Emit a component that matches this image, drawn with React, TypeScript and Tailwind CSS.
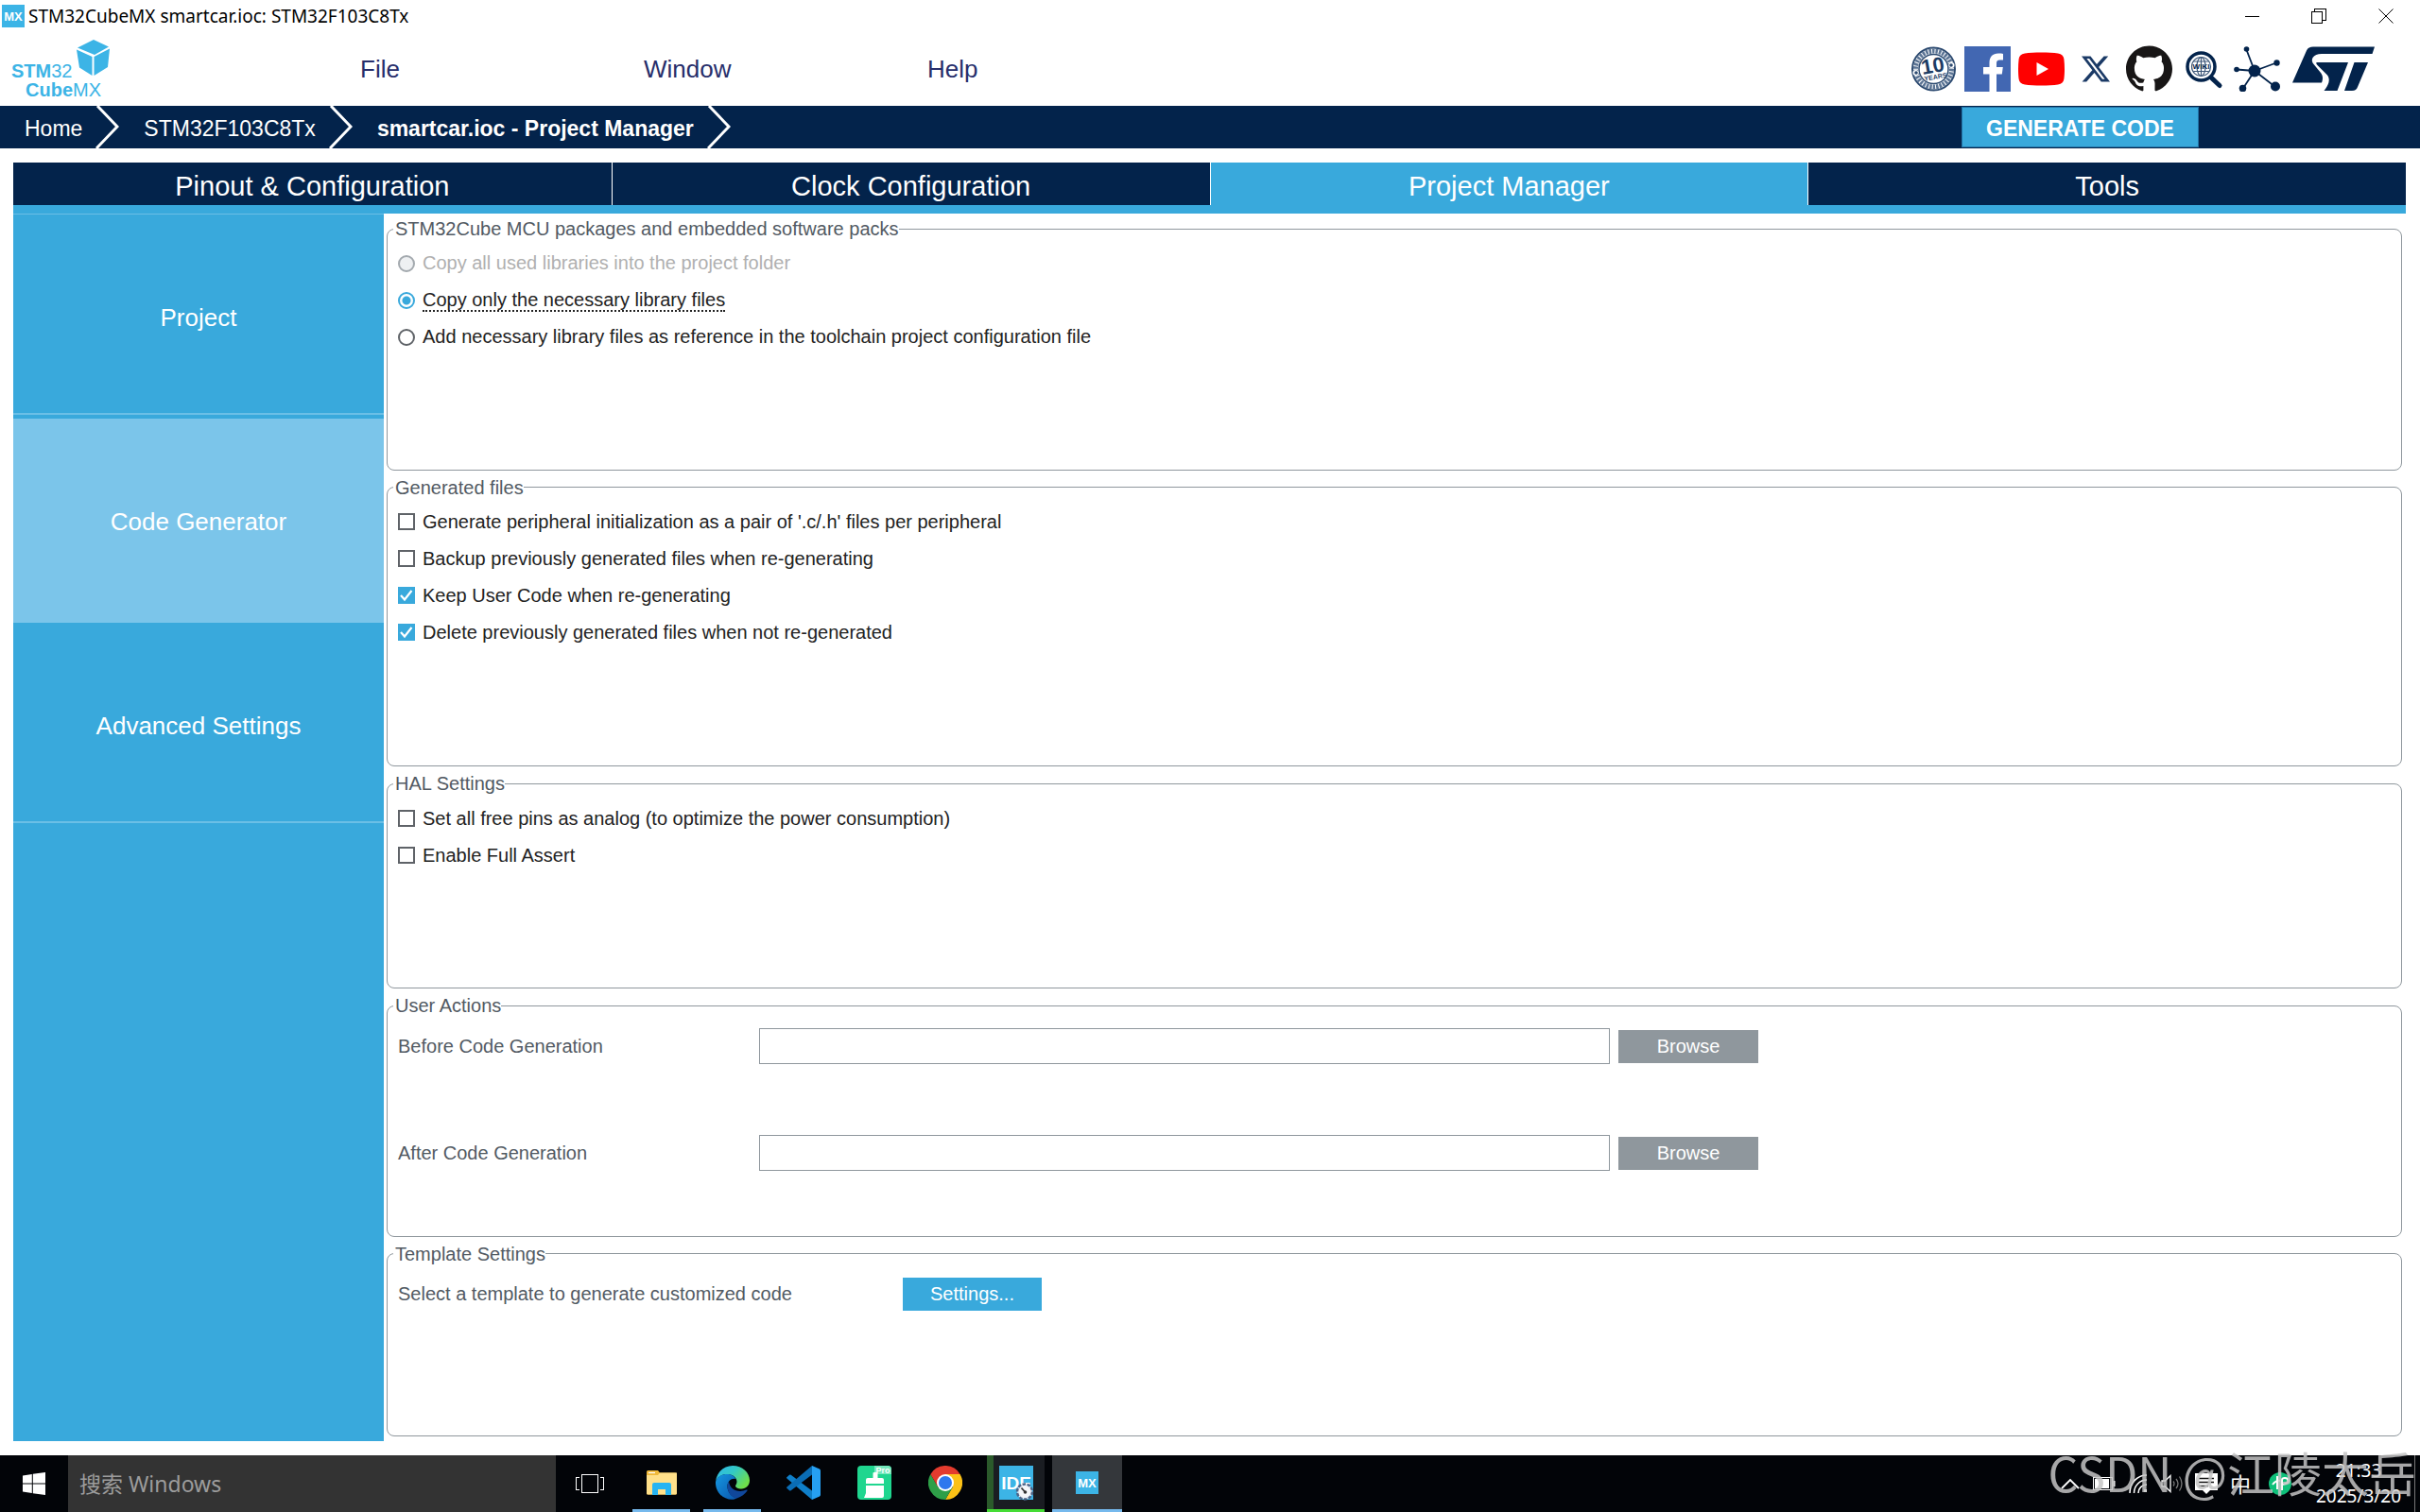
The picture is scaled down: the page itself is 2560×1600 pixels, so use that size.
import React, { useState } from 'react';
import { SiGithub, SiX } from 'react-icons/si';

interface Crumb {
  label: string;
  current?: boolean;
}

interface Choice {
  id: string;
  label: string;
  disabled?: boolean;
}

const MENUS: string[] = ['File', 'Window', 'Help'];

const CRUMBS: Crumb[] = [
  { label: 'Home' },
  { label: 'STM32F103C8Tx' },
  { label: 'smartcar.ioc - Project Manager', current: true },
];

const TABS: string[] = ['Pinout & Configuration', 'Clock Configuration', 'Project Manager', 'Tools'];

const SECTIONS: string[] = ['Project', 'Code Generator', 'Advanced Settings'];

const LIBRARY_CHOICES: Choice[] = [
  { id: 'copy-all', label: 'Copy all used libraries into the project folder', disabled: true },
  { id: 'copy-needed', label: 'Copy only the necessary library files' },
  {
    id: 'reference',
    label: 'Add necessary library files as reference in the toolchain project configuration file',
  },
];

const FILE_OPTIONS: Choice[] = [
  { id: 'pair', label: "Generate peripheral initialization as a pair of '.c/.h' files per peripheral" },
  { id: 'backup', label: 'Backup previously generated files when re-generating' },
  { id: 'keep', label: 'Keep User Code when re-generating' },
  { id: 'delete', label: 'Delete previously generated files when not re-generated' },
];

const HAL_OPTIONS: Choice[] = [
  { id: 'analog', label: 'Set all free pins as analog (to optimize the power consumption)' },
  { id: 'assert', label: 'Enable Full Assert' },
];

/* ---------- logos and icons ---------- */

const CubeLogo: React.FC = () => (
  <svg width="104" height="62" viewBox="0 0 104 62" aria-label="STM32 CubeMX">
    <path d="M70 8.500 87 0l16 7.500-15 8.500z" fill="#3cb4e6" />
    <path d="M69 10.500 85.500 18V38L72 29.500z" fill="#3cb4e6" />
    <path d="M87.500 18 104 9.500 102 29 87.500 38z" fill="#3cb4e6" />
    <text x="0" y="40" fontSize="20" fill="#3cb4e6" fontFamily="Liberation Sans, sans-serif">
      <tspan fontWeight="700">STM</tspan>32
    </text>
    <text x="15" y="60" fontSize="20" fill="#3cb4e6" fontFamily="Liberation Sans, sans-serif">
      <tspan fontWeight="700">Cube</tspan>MX
    </text>
  </svg>
);

const MxIcon: React.FC<{ size: number }> = ({ size }) => (
  <svg width={size} height={size} viewBox="0 0 24 24">
    <rect width="24" height="24" fill="#3cb4e6" />
    <text
      x="12"
      y="17"
      fontSize="13"
      fontWeight="700"
      textAnchor="middle"
      fill="#fff"
      fontFamily="Liberation Sans, sans-serif"
    >
      MX
    </text>
  </svg>
);

const TenYearsIcon: React.FC = () => (
  <svg width="49" height="48" viewBox="0 0 49 48">
    <circle cx="24.500" cy="24" r="22.500" fill="#fff" stroke="#2c4a70" strokeWidth="2" />
    <circle cx="24.500" cy="24" r="19" fill="none" stroke="#5b7494" strokeWidth="5" strokeDasharray="2.500 1" />
    <circle cx="24.500" cy="24" r="15.500" fill="#fff" stroke="#2c4a70" strokeWidth="1.500" />
    <circle cx="5.500" cy="28" r="3" fill="#fff" />
    <circle cx="43.500" cy="20" r="3" fill="#fff" />
    <circle cx="6" cy="28" r="1.800" fill="#2c4a70" />
    <circle cx="43" cy="20" r="1.800" fill="#2c4a70" />
    <g transform="rotate(-10 24 24)" fill="#1d3c64" fontFamily="Liberation Sans, sans-serif" fontWeight="700">
      <text x="24" y="28" fontSize="22" textAnchor="middle">10</text>
      <text x="25" y="35" fontSize="7" textAnchor="middle">YEARS</text>
    </g>
  </svg>
);

const FacebookIcon: React.FC = () => (
  <svg width="49" height="48" viewBox="0 0 49 48">
    <rect width="49" height="48" fill="#4267b2" />
    <path
      d="M26.500 48V29.500H20V22h6.500v-4.500C26.500 11 30 7.500 36 7.500c2 0 4 .2 5 .4v6.600h-3.600c-2.700 0-3.400 1.400-3.400 3.500v4h6.800l-1 7.500H34V48z"
      fill="#fff"
    />
  </svg>
);

const YoutubeIcon: React.FC = () => (
  <svg width="49" height="48" viewBox="0 0 49 48">
    <path
      d="M7 7.500c9-1.300 26-1.300 35 0 4 .6 6 2.500 6.400 6 .8 6.500.8 15 0 21-.4 3.500-2.400 5.400-6.400 6-9 1.300-26 1.300-35 0-4-.6-6-2.500-6.400-6-.8-6-.8-14.500 0-21C1 10 3 8.100 7 7.500z"
      fill="#f00"
    />
    <path d="M19.500 17v14L32 24z" fill="#fff" />
  </svg>
);

const WikiIcon: React.FC = () => (
  <svg width="49" height="48" viewBox="0 0 49 48" fill="none" stroke="#03234b">
    <path d="m30 30 7 6.500" strokeWidth="4" />
    <path d="m34 34 8 7.500" strokeWidth="5" strokeLinecap="round" />
    <circle cx="22.500" cy="21.500" r="14.500" strokeWidth="3.500" fill="#fff" />
    <g strokeWidth="1.200" stroke="#3d5778">
      <circle cx="22.500" cy="21.500" r="10" />
      <ellipse cx="22.500" cy="21.500" rx="4.500" ry="10" />
      <path d="M22.500 11.500v20M14.500 16h16M14.500 26.500h16" />
    </g>
    <text
      x="22.500"
      y="24"
      fontSize="8"
      fontWeight="700"
      textAnchor="middle"
      fill="#03234b"
      stroke="none"
      fontFamily="Liberation Sans, sans-serif"
    >
      WIKI
    </text>
  </svg>
);

const CommunityIcon: React.FC = () => (
  <svg width="49" height="48" viewBox="0 0 49 48" fill="#03234b">
    <path d="M22 26 13 2.500M22 26 45 17.500M22 26 3 24.500M22 26 9.500 45M22 26l22 17" stroke="#03234b" strokeWidth="1.800" />
    <circle cx="22" cy="26" r="6.500" />
    <circle cx="13.500" cy="3" r="2.800" />
    <circle cx="45.500" cy="17.500" r="3.200" />
    <circle cx="3" cy="24.500" r="2.800" />
    <circle cx="9.500" cy="44.500" r="3.800" />
    <circle cx="44" cy="42.500" r="5" />
  </svg>
);

const StLogo: React.FC = () => (
  <svg width="87" height="48" viewBox="0 0 87 48" fill="#03234b">
    <path d="M15 4.500C16.500 1.500 18.500.500 22 .500h65L84.500 8H31c-9 0-13 6-8 11.500l7 8.500c2.500 3 2.500 7 1 10.500H0z" />
    <path d="M25.500 17H59L47.500 47H33.500c5-6 7-12 3.500-16.500L26.500 20c-1-1-1.500-2-1-3z" />
    <path d="M65.500 17h14.500L69 43c-1 2.800-2.500 4-6 4h-8z" />
  </svg>
);

const WindowsLogo: React.FC = () => (
  <svg width="24" height="24" viewBox="0 0 24 24" fill="#fff">
    <path d="M0 3.400 9.800 2v9.500H0zM10.800 1.800 24 0v11.500H10.800zM0 12.500h9.800V22L0 20.600zM10.800 12.500H24V24l-13.200-1.800z" />
  </svg>
);

const TaskViewIcon: React.FC = () => (
  <svg width="30" height="20" viewBox="0 0 30 20" fill="none" stroke="#fff" shapeRendering="crispEdges">
    <rect x="6.500" y=".500" width="17" height="19" />
    <path d="M4 3.500H.500v13H4M26 3.500h3.500v13H26" />
  </svg>
);

const FolderIcon: React.FC = () => (
  <svg width="36" height="36" viewBox="0 0 36 36">
    <path d="M2 6.500Q2 5 3.500 5H14l2 2.500h16.500q1.500 0 1.500 1.500v20q0 1.500-1.500 1.500h-29Q2 30.500 2 29z" fill="#f0b93a" />
    <path d="M2 10h12l2-2.500h18V29q0 1.500-1.500 1.500h-29Q2 30.500 2 29z" fill="#ffe08a" />
    <path d="M4 7.500h7" stroke="#fff" strokeWidth="1.200" />
    <path d="M8 31V20q0-2 2-2h16q2 0 2 2v11h-6v-6h-8v6z" fill="#27b4f2" />
  </svg>
);

const EdgeIcon: React.FC = () => (
  <svg width="36" height="36" viewBox="0 0 36 36">
    <defs>
      <linearGradient id="edge-top" x1="0" y1="0" x2="1" y2=".6">
        <stop offset="0" stopColor="#2fb7ee" />
        <stop offset=".5" stopColor="#33c9c4" />
        <stop offset="1" stopColor="#6fdf4a" />
      </linearGradient>
      <linearGradient id="edge-low" x1="0" y1="0" x2="1" y2="1">
        <stop offset="0" stopColor="#1597e0" />
        <stop offset="1" stopColor="#0a56ae" />
      </linearGradient>
    </defs>
    <path d="M0 17C1 7 8.500 0 18 0c10.500 0 18 7.500 18 15.500 0 5.500-4 9-8.500 9-4 0-6.500-1.500-6.500-3 0-1 1.500-2 1.500-4.500 0-4-4-8-10-8C6 9 1 12.500 0 17z" fill="url(#edge-top)" />
    <path d="M0 17c1-4.500 5.500-8 12-8 4.500 0 8 2 9.500 5-5-1-9 2.500-9 8 0 6 4.500 11 10 12.500-2 1-3.500 1.300-5 1.300C7 35.800-.500 27 0 17z" fill="url(#edge-low)" />
    <path d="M14 16c-1 1.800-1.500 3.800-1.500 6 0 6 4 11.500 10 12.500 5-1.500 8.500-4.500 11-8 .4-.8-.2-1.200-.9-.9-8 3.400-18.100.4-18.600-9.600z" fill="#10479b" />
  </svg>
);

const VscodeIcon: React.FC = () => (
  <svg width="36" height="36" viewBox="0 0 36 36">
    <path d="M0 12.500 3 9.800q.8-.6 1.700 0L27 26.500V36L1 14q-1-.8-1-1.500z" fill="#0f7fc9" />
    <path d="M0 23.500l3 2.700q.8.600 1.700 0L27 9.500V0L1 22q-1 .8-1 1.500z" fill="#0a6db5" />
    <path d="M27 0l8 3.500q1 .5 1 1.700v25.600q0 1.200-1 1.700L27 36z" fill="#26a0f2" />
  </svg>
);

const CleanerIcon: React.FC = () => (
  <svg width="36" height="36" viewBox="0 0 36 36">
    <rect width="36" height="36" rx="4" fill="#1fd68f" />
    <path d="M18 0h14q4 0 4 4v5H18z" fill="#74e8bb" />
    <text x="27" y="8" fontSize="9" fontWeight="700" textAnchor="middle" fill="#fff" fontFamily="Liberation Sans, sans-serif">
      Pro
    </text>
    <path d="M16.500 7.500q2.500-1.500 5 0V13H26q2 0 2 2v4H9v-4q0-2 2-2h5.500zM9 21h19v11q0 2-2 2H7l2-5z" fill="#fff" />
  </svg>
);

const ChromeIcon: React.FC = () => (
  <svg width="36" height="36" viewBox="0 0 36 36">
    <path d="M18 9h15.600A18 18 0 0 1 18 36l7.800-13.500z" fill="#fbc116" />
    <path d="M10.200 22.500 2.400 9A18 18 0 0 0 18 36l7.800-13.500z" fill="#2e9f48" />
    <path d="M10.200 22.500 2.400 9A18 18 0 0 1 33.600 9H18z" fill="#e33b2e" />
    <circle cx="18" cy="18" r="9" fill="#fff" />
    <circle cx="18" cy="18" r="7" fill="#2f78ee" />
  </svg>
);

const IdeIcon: React.FC = () => (
  <svg width="36" height="36" viewBox="0 0 36 36" overflow="visible">
    <rect width="36" height="36" fill="#3cb4e6" />
    <text x="18" y="25" fontSize="19" fontWeight="700" textAnchor="middle" fill="#fff" fontFamily="Liberation Sans, sans-serif">
      IDE
    </text>
    <circle cx="27" cy="27.500" r="8" fill="#e9edf5" stroke="#4c6488" strokeWidth="2.500" strokeDasharray="3.500 1.500" />
    <circle cx="27" cy="27.500" r="6" fill="#f4f6fa" />
    <path d="m23.500 23.500 4 4.500" stroke="#333" strokeWidth="1.800" />
    <circle cx="27.500" cy="28" r="1.800" fill="#333" />
  </svg>
);

/* ---------- window parts ---------- */

const TitleBar: React.FC = () => (
  <div className="flex h-[33px] items-center pl-[2px]">
    <MxIcon size={24} />
    <span className="ml-1 font-['Noto_Sans',sans-serif] text-[19px] leading-[24px] text-black">
      STM32CubeMX smartcar.ioc: STM32F103C8Tx
    </span>
    <div className="ml-auto flex">
      <button aria-label="Minimize" className="flex w-[70px] justify-center">
        <svg width="16" height="16" stroke="#000" shapeRendering="crispEdges">
          <path d="M0 8.500h15" />
        </svg>
      </button>
      <button aria-label="Restore" className="flex w-[70px] justify-center">
        <svg width="16" height="16" fill="none" stroke="#000" shapeRendering="crispEdges">
          <path d="M.500 3.500h11v12H.500zM3.500 3V.500h12v12H12" />
        </svg>
      </button>
      <button aria-label="Close" className="flex w-[72px] justify-center">
        <svg width="16" height="16" stroke="#000">
          <path d="m.500.500 15 15m0-15-15 15" />
        </svg>
      </button>
    </div>
  </div>
);

const Header: React.FC = () => (
  <header className="flex h-[79px] items-center pr-[48px]">
    <div className="w-[381px] shrink-0 pl-[12px]">
      <CubeLogo />
    </div>
    <nav className="flex">
      {MENUS.map((m) => (
        <button key={m} className="w-[300px] text-left text-[26px] leading-[32px] text-[#272e6b]">
          {m}
        </button>
      ))}
    </nav>
    <div className="ml-auto flex items-center gap-2">
      <a href="#ten-years" aria-label="10 years"><TenYearsIcon /></a>
      <a href="#facebook" aria-label="Facebook"><FacebookIcon /></a>
      <a href="#youtube" aria-label="YouTube"><YoutubeIcon /></a>
      <a href="#x" aria-label="X" className="flex w-[49px] justify-center">
        <SiX size={30} color="#1b3a66" />
      </a>
      <a href="#github" aria-label="GitHub"><SiGithub size={49} color="#181616" /></a>
      <a href="#wiki" aria-label="Wiki"><WikiIcon /></a>
      <a href="#community" aria-label="Community"><CommunityIcon /></a>
      <a href="#st" aria-label="STMicroelectronics" className="ml-[5px]"><StLogo /></a>
    </div>
  </header>
);

const Breadcrumbs: React.FC = () => (
  <div className="flex h-[45px] items-center bg-[#03234b] text-[23px] text-white">
    <ol className="flex h-full items-center">
      {CRUMBS.map((c) => (
        <li key={c.label} className="flex h-full items-center pl-[26px]">
          <a href="#crumb" className={c.current ? 'pt-[3px] font-bold' : 'pt-[3px]'}>
            {c.label}
          </a>
          <svg width="25" height="45" viewBox="0 0 25 45" fill="none" className="ml-[14px]">
            <path d="M2 0 23 22 1 45" stroke="#fff" strokeWidth="3" />
          </svg>
        </li>
      ))}
    </ol>
    <button className="mr-[234px] ml-auto h-[43px] w-[251px] border border-[#2273a6] bg-[#39a9dc] pt-[3px] font-bold">
      GENERATE CODE
    </button>
  </div>
);

const Group: React.FC<{ title: string; className: string; children: React.ReactNode }> = ({
  title,
  className,
  children,
}) => (
  <fieldset className={`min-h-0 rounded-lg border border-[#8f979d] px-[11px] ${className}`}>
    <legend className="-ml-[5px] pl-[2px] text-[20px] leading-[24px] text-[#525a63]">{title}</legend>
    <div className="pt-[5px]">{children}</div>
  </fieldset>
);

const CheckRow: React.FC<{ option: Choice; checked: boolean; onToggle: () => void }> = ({
  option,
  checked,
  onToggle,
}) => (
  <div className="flex h-[39px] items-center gap-2">
    <span className="grid">
      <input
        id={option.id}
        type="checkbox"
        checked={checked}
        onChange={onToggle}
        className="peer col-start-1 row-start-1 h-[18px] w-[18px] appearance-none border-2 border-[#5f6368] bg-white checked:border-[#39a9dc] checked:bg-[#39a9dc]"
      />
      <svg
        viewBox="0 0 18 18"
        className="pointer-events-none col-start-1 row-start-1 hidden h-[18px] w-[18px] peer-checked:block"
        fill="none"
        stroke="#fff"
        strokeWidth="2.200"
      >
        <path d="m3 9 4 4.500L14.500 4" />
      </svg>
    </span>
    <label htmlFor={option.id} className="text-[20px] leading-[24px] text-[#222]">
      {option.label}
    </label>
  </div>
);

const ActionRow: React.FC<{ id: string; label: string }> = ({ id, label }) => (
  <div className="flex h-[38px] items-center">
    <label htmlFor={id} className="w-[382px] text-[20px] leading-[24px] text-[#525a63]">
      {label}
    </label>
    <input id={id} type="text" className="h-full w-[900px] border border-[#8f979d] bg-white px-2 text-[20px]" />
    <button className="ml-[9px] h-[35px] w-[148px] bg-[#8f979d] text-[20px] leading-[24px] text-white">Browse</button>
  </div>
);

const TaskButton: React.FC<{ label: string; open?: boolean; children: React.ReactNode }> = ({
  label,
  open,
  children,
}) => (
  <button
    aria-label={label}
    className={`flex w-[61px] items-center justify-center border-b-[3px] ${open ? 'border-[#76b9ed]' : 'border-transparent'}`}
  >
    {children}
  </button>
);

const Taskbar: React.FC = () => (
  <footer className="flex h-[60px] bg-[#020408] font-['Noto_Sans','Noto_Sans_CJK_SC',sans-serif] text-white">
    <button aria-label="Start" className="flex w-[72px] items-center justify-center">
      <WindowsLogo />
    </button>
    <input
      type="text"
      aria-label="Search"
      placeholder="搜索 Windows"
      className="w-[516px] bg-[#333] pl-[12px] text-[23px] placeholder:text-[#9c9c9c]"
    />
    <button aria-label="Task view" className="mr-[9px] flex w-[72px] items-center justify-center">
      <TaskViewIcon />
    </button>
    <div className="flex gap-[14px]">
      <TaskButton label="File Explorer" open><FolderIcon /></TaskButton>
      <TaskButton label="Edge" open><EdgeIcon /></TaskButton>
      <TaskButton label="Visual Studio Code"><VscodeIcon /></TaskButton>
      <TaskButton label="Cleaner"><CleanerIcon /></TaskButton>
      <TaskButton label="Chrome"><ChromeIcon /></TaskButton>
      <button
        aria-label="STM32CubeIDE"
        className="flex w-[61px] items-center justify-center border-b-[3px] border-[#45dc35] bg-[linear-gradient(90deg,#2b5a2b_7px,#1a1d22_7px)]"
      >
        <IdeIcon />
      </button>
    </div>
    <button
      aria-label="STM32CubeMX"
      className="ml-2 flex w-[74px] items-center justify-center border-b-[3px] border-[#76b9ed] bg-[#34373b]"
    >
      <MxIcon size={24} />
    </button>

    <div className="ml-auto flex items-center">
      <button aria-label="Hidden icons" className="flex w-9 justify-center">
        <svg width="20" height="12" fill="none" stroke="#fff" strokeWidth="1.800"><path d="m1 11 9-9 9 9" /></svg>
      </button>
      <button aria-label="Battery" className="flex w-9 justify-center">
        <svg width="24" height="14" fill="none" stroke="#fff">
          <rect x=".500" y=".500" width="20" height="13" />
          <rect x="2.500" y="2.500" width="14" height="9" fill="#fff" />
          <path d="M22.500 4v6" strokeWidth="2" />
        </svg>
      </button>
      <button aria-label="Network" className="flex w-9 justify-center">
        <svg width="20" height="20" fill="none" stroke="#fff" strokeWidth="1.500">
          <path d="M1 20C1 9 9 1 19 1M5.500 20C5.500 12 12 6 19 6M10 20c0-5 4-9 9-9" />
          <rect x="16" y="16" width="3" height="3" fill="#fff" stroke="none" />
        </svg>
      </button>
      <button aria-label="Volume" className="flex w-9 justify-center">
        <svg width="24" height="20" fill="none" stroke="#fff" strokeWidth="1.300">
          <path d="M1 7h3.500L10 1.500v17L4.500 13H1z" />
          <path d="M13 7.500q2 2.500 0 5M16 5q4 5 0 10M19.500 2.500q5 7.500 0 15" stroke="#777" />
        </svg>
      </button>
      <button aria-label="Notifications" className="flex w-9 justify-center">
        <svg width="24" height="24">
          <path d="M0 1h24v18h-8l-4 4-4-4H0z" fill="#fff" />
          <path d="M4 6.500h16M4 10.500h16M4 14.500h10" stroke="#111" strokeWidth="1.300" />
        </svg>
      </button>
      <button className="w-9 text-center text-[22px] leading-[24px]">中</button>
      <button aria-label="Input method" className="flex w-12 justify-center">
        <svg width="24" height="24" fill="none">
          <circle cx="12" cy="12" r="12" fill="#0ec07a" />
          <path d="M9 4v14M4 13q4-5 8-4M14 19V8q0-2 3-2 3.500 0 3.500 3T14 13" stroke="#fff" strokeWidth="2" />
        </svg>
      </button>
      <button className="w-[118px] text-center text-[19px] leading-[27px]">
        <span className="block">21:33</span>
        <span className="block">2025/3/20</span>
      </button>
      <button aria-label="Show desktop" className="h-[60px] w-[6px] border-l border-[#777]" />
    </div>
  </footer>
);

export default function App() {
  const [tab, setTab] = useState<string>('Project Manager');
  const [section, setSection] = useState<string>('Code Generator');
  const [library, setLibrary] = useState<string>('copy-needed');
  const [enabled, setEnabled] = useState<string[]>(['keep', 'delete']);

  const toggle = (id: string) =>
    setEnabled((prev) => (prev.includes(id) ? prev.filter((e) => e !== id) : [...prev, id]));

  return (
    <div className="relative flex min-h-screen flex-col overflow-hidden bg-white font-['Liberation_Sans',Arial,sans-serif]">
      <TitleBar />
      <Header />
      <Breadcrumbs />

      <main className="flex flex-1 flex-col py-[15px] pr-[15px] pl-[14px]">
        <div className="grid grid-cols-4 border-b-[9px] border-[#39a9dc]">
          {TABS.map((t) => (
            <button
              key={t}
              onClick={() => setTab(t)}
              className={[
                'h-[45px] border-l border-white pt-[5px] text-[29px] leading-[40px] text-white first:border-l-0',
                t === tab ? 'bg-[#39a9dc]' : 'bg-[#03234b]',
              ].join(' ')}
            >
              {t}
            </button>
          ))}
        </div>

        <div className="flex flex-1">
          <aside className="w-[392px] shrink-0 border-t border-[#6bbfe6] bg-[#39a9dc]">
            {SECTIONS.map((s) => (
              <button
                key={s}
                onClick={() => setSection(s)}
                className={[
                  'block h-[216px] w-full pt-[3px] text-[26px] text-white',
                  s === section
                    ? 'bg-[#7bc5ea]'
                    : 'bg-[linear-gradient(#6bbfe6,#6bbfe6)] bg-[length:100%_2px] bg-[position:0_210px] bg-no-repeat',
                ].join(' ')}
              >
                {s}
              </button>
            ))}
          </aside>

          <div className="flex flex-1 flex-col gap-[6px] pt-1 pr-1 pb-[5px] pl-[3px]">
            <Group title="STM32Cube MCU packages and embedded software packs" className="flex-[268_1_0%]">
              {LIBRARY_CHOICES.map((c) => (
                <div key={c.id} className="flex h-[39px] items-center gap-2">
                  <input
                    id={c.id}
                    type="radio"
                    name="library"
                    disabled={c.disabled}
                    checked={library === c.id}
                    onChange={() => setLibrary(c.id)}
                    className="h-[18px] w-[18px] appearance-none rounded-full border-2 border-[#5f6368] bg-white checked:border-[#39a9dc] checked:bg-[radial-gradient(circle,#39a9dc_4px,transparent_5px)] disabled:border-[#a3a9ae] disabled:bg-[#eef0f2]"
                  />
                  <label
                    htmlFor={c.id}
                    className={[
                      'border-b-2 border-dotted text-[20px] leading-[22px]',
                      c.disabled ? 'text-[#b0b0b0]' : 'text-[#222]',
                      library === c.id ? 'border-[#222]' : 'border-transparent',
                    ].join(' ')}
                  >
                    {c.label}
                  </label>
                </div>
              ))}
            </Group>

            <Group title="Generated files" className="flex-[308_1_0%]">
              {FILE_OPTIONS.map((o) => (
                <CheckRow key={o.id} option={o} checked={enabled.includes(o.id)} onToggle={() => toggle(o.id)} />
              ))}
            </Group>

            <Group title="HAL Settings" className="flex-[229_1_0%]">
              {HAL_OPTIONS.map((o) => (
                <CheckRow key={o.id} option={o} checked={enabled.includes(o.id)} onToggle={() => toggle(o.id)} />
              ))}
            </Group>

            <Group title="User Actions" className="flex-[257_1_0%]">
              <div className="flex flex-col gap-[75px] pt-[7px]">
                <ActionRow id="before" label="Before Code Generation" />
                <ActionRow id="after" label="After Code Generation" />
              </div>
            </Group>

            <Group title="Template Settings" className="flex-[205_1_0%]">
              <div className="flex items-center pt-[8px]">
                <span className="w-[534px] text-[20px] leading-[24px] text-[#525a63]">
                  Select a template to generate customized code
                </span>
                <button className="h-[35px] w-[147px] bg-[#39a9dc] text-[20px] leading-[24px] text-white">
                  Settings...
                </button>
              </div>
            </Group>
          </div>
        </div>
      </main>

      <Taskbar />

      <div className="pointer-events-none absolute right-[4px] bottom-[13px] font-['Noto_Sans_CJK_SC',sans-serif] text-[50px] leading-[60px] text-[#c4c4c4]/85">
        CSDN @江陵太岳
      </div>
    </div>
  );
}
